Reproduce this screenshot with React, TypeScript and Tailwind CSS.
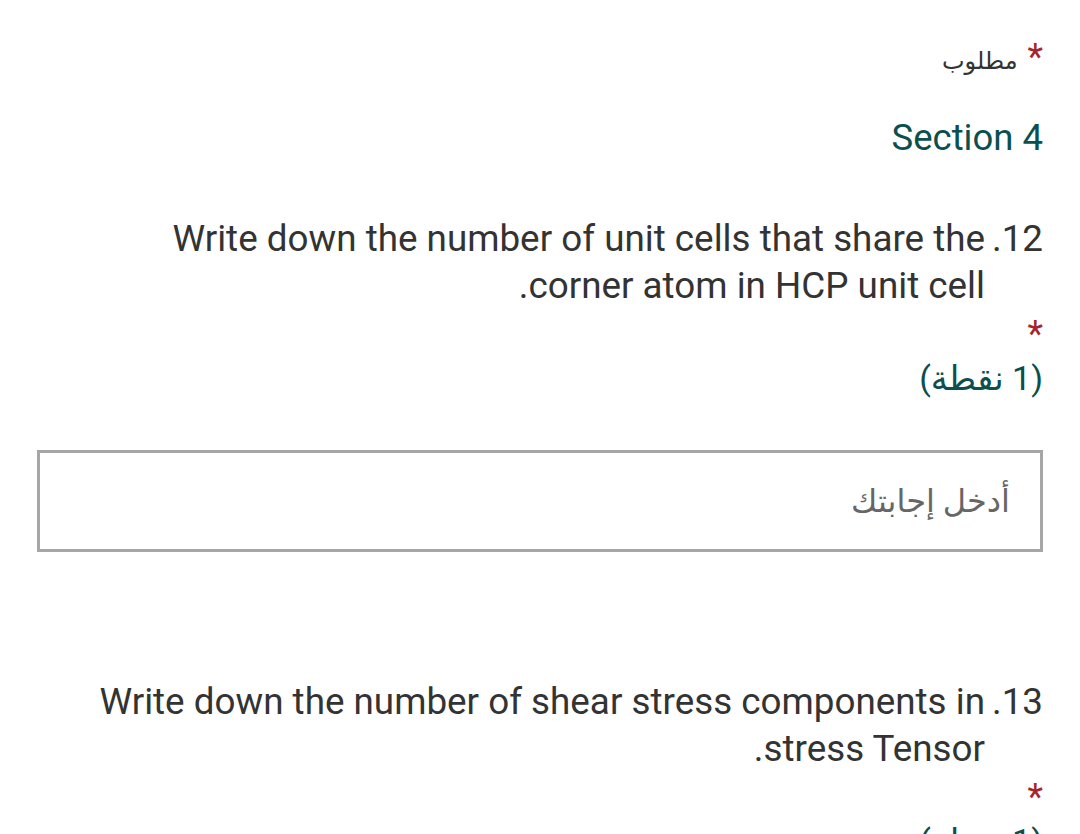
import React from "react";

interface QuestionProps {
  num: number;
  text: string;
}

function Question({ num, text }: QuestionProps) {
  return (
    <div>
      <div className="flex flex-row items-start text-[36.8px] leading-[47px] text-[#333333]">
        <span className="shrink-0 w-[58px]">{num}.</span>
        <span className="max-w-[900px]">{text}</span>
      </div>
      <div className="mt-[8px] h-[34px] text-[36px] leading-[34px] text-[#a4262c]">*</div>
      <div className="mt-[4px] text-[34px] leading-[47px] text-[#0b4f4f]">(1 نقطة)</div>
    </div>
  );
}

export default function App() {
  return (
    <div
      dir="rtl"
      className="w-[1080px] h-[834px] overflow-hidden bg-white px-[37px]"
      style={{ fontFamily: "Roboto, 'Noto Sans', 'DejaVu Sans', sans-serif" }}
    >
      <div className="pt-[41px] flex items-start gap-[10px] text-[24px] leading-[32px] text-[#333333]">
        <span className="text-[#a4262c] text-[36px] leading-[32px]">*</span>
        <span className="pt-[4px]">مطلوب</span>
      </div>

      <div className="mt-[39px] text-[36.5px] leading-[44px] text-[#0b4f4f]">Section 4</div>

      <div className="mt-[55px]">
        <Question
          num={12}
          text="Write down the number of unit cells that share the corner atom in HCP unit cell."
        />
      </div>

      <div className="mt-[48px] h-[102px] border-[3px] border-[#a6a6a6] flex items-center pr-[30px]">
        <span className="text-[32px] text-[#666666]">أدخل إجابتك</span>
      </div>

      <div className="mt-[126px]">
        <Question num={13} text="Write down the number of shear stress components in stress Tensor." />
      </div>
    </div>
  );
}
